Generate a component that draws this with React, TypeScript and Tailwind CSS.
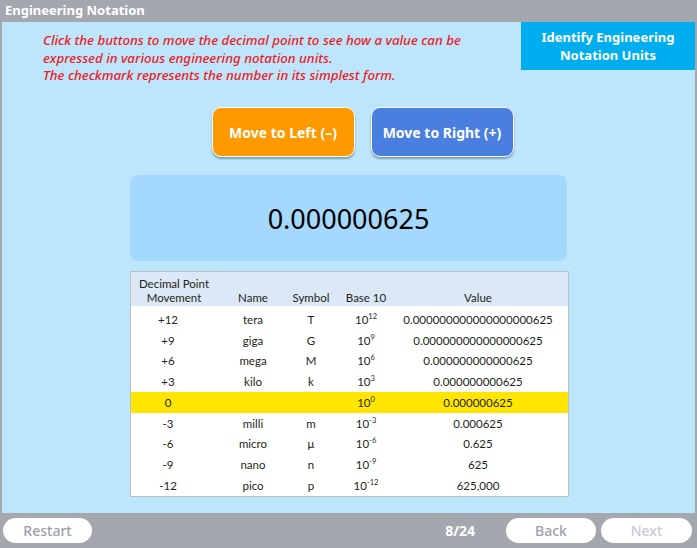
const rows = [
  { move: "+12", name: "tera", sym: "T", exp: "12", value: "0.000000000000000000625" },
  { move: "+9", name: "giga", sym: "G", exp: "9", value: "0.000000000000000625" },
  { move: "+6", name: "mega", sym: "M", exp: "6", value: "0.000000000000625" },
  { move: "+3", name: "kilo", sym: "k", exp: "3", value: "0.000000000625" },
  { move: "0", name: "", sym: "", exp: "0", value: "0.000000625", active: true },
  { move: "-3", name: "milli", sym: "m", exp: "-3", value: "0.000625" },
  { move: "-6", name: "micro", sym: "µ", exp: "-6", value: "0.625" },
  { move: "-9", name: "nano", sym: "n", exp: "-9", value: "625" },
  { move: "-12", name: "pico", sym: "p", exp: "-12", value: "625,000" },
];

const cols = "grid grid-cols-[74px_96px_20px_90px_134px]";

function Cell({ children }: { children?: React.ReactNode }) {
  return <div className="flex justify-center whitespace-nowrap">{children}</div>;
}

export default function App() {
  return (
    <div className="flex h-[548px] w-[697px] flex-col bg-[#a4a8ae] font-['Noto_Sans',sans-serif]">
      {/* title bar */}
      <div className="flex h-[22px] shrink-0 items-center pl-[5px] text-[13px] font-bold text-white">
        Engineering Notation
      </div>

      {/* main */}
      <div className="mx-[2px] flex flex-1 flex-col bg-[#bde6fc]">
        <div className="flex items-start justify-between">
          <div className="pl-[41px] pt-[10px] text-[13.3px] font-medium italic leading-[17.7px] text-[#ec1c24]">
            <p>Click the buttons to move the decimal point to see how a value can be</p>
            <p>expressed in various engineering notation units.</p>
            <p>The checkmark represents the number in its simplest form.</p>
          </div>
          <div className="flex h-[48px] w-[174px] shrink-0 flex-col items-center justify-center bg-[#00aeef] text-[13px] font-bold leading-[18px] text-white">
            <span>Identify Engineering</span>
            <span>Notation Units</span>
          </div>
        </div>

        {/* buttons */}
        <div className="mt-[22px] flex justify-center gap-[16px] pl-[28px]">
          <button className="h-[50px] w-[143px] rounded-[9px] border-[1.5px] border-white bg-[#ff9900] text-[14px] font-bold text-white shadow-[0_2px_2px_rgba(40,70,110,0.45)]">
            Move to Left (–)
          </button>
          <button className="h-[50px] w-[143px] rounded-[9px] border-[1.5px] border-white bg-[#4a7fdf] text-[14px] font-bold text-white shadow-[0_2px_2px_rgba(40,70,110,0.45)]">
            Move to Right (+)
          </button>
        </div>

        {/* display */}
        <div className="ml-[128px] mt-[18px] flex h-[86px] w-[437px] items-center justify-center rounded-[8px] bg-[#a4d9fd] pt-[3px] text-[27px] text-black">
          0.000000625
        </div>

        {/* table */}
        <div className="ml-[128px] mt-[10px] h-[226px] w-[439px] border border-[#b9c0c8] bg-white font-['Lato',sans-serif] text-[11.5px] text-[#231f20]">
          <div className={`${cols} h-[34px] items-end bg-[#dbe8f5] pb-[2px] text-[11.5px] leading-[13.5px]`}>
            <div className="flex flex-col items-center whitespace-nowrap pl-[12px]">
              <span>Decimal Point</span>
              <span>Movement</span>
            </div>
            <Cell>Name</Cell>
            <Cell>Symbol</Cell>
            <Cell>Base 10</Cell>
            <Cell>Value</Cell>
          </div>
          <div className="pt-[3px]">
            {rows.map((r) => (
              <div
                key={r.move}
                className={`${cols} h-[20.75px] items-center ${r.active ? "bg-[#ffe500]" : ""}`}
              >
                <Cell>{r.move}</Cell>
                <Cell>{r.name}</Cell>
                <Cell>{r.sym}</Cell>
                <Cell>
                  <span>
                    10<sup className="relative top-[-5px] align-baseline text-[7.5px]">{r.exp}</sup>
                  </span>
                </Cell>
                <Cell>{r.value}</Cell>
              </div>
            ))}
          </div>
        </div>
        <div className="flex-1" />
      </div>

      {/* bottom bar */}
      <div className="flex h-[35px] shrink-0 items-center pl-[3px] pr-[5px] text-[14px]">
        <button className="h-[25px] w-[89px] rounded-full bg-white font-medium text-[#9ba0a7]">Restart</button>
        <div className="flex-1" />
        <span className="mr-[31px] font-bold text-white">8/24</span>
        <button className="h-[25px] w-[90px] rounded-full bg-white font-medium text-[#9ba0a7]">Back</button>
        <button className="ml-[5px] h-[25px] w-[91px] rounded-full bg-white font-medium text-[#c9ccd0]">Next</button>
      </div>
    </div>
  );
}
